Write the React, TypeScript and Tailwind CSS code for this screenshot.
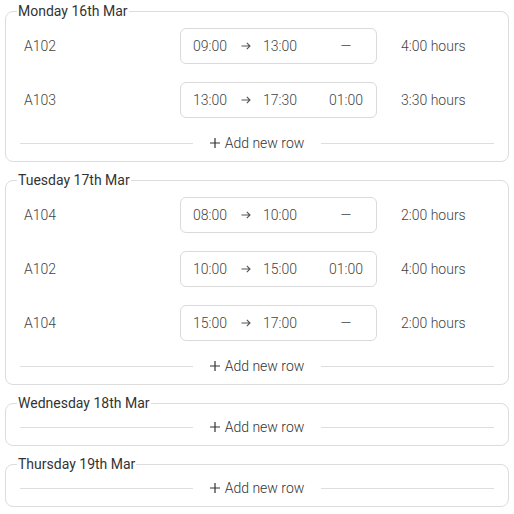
type Row = { room: string; start: string; end: string; brk: string | null; hours: string };
type Day = { label: string; rows: Row[] };

const days: Day[] = [
  {
    label: "Monday 16th Mar",
    rows: [
      { room: "A102", start: "09:00", end: "13:00", brk: null, hours: "4:00 hours" },
      { room: "A103", start: "13:00", end: "17:30", brk: "01:00", hours: "3:30 hours" },
    ],
  },
  {
    label: "Tuesday 17th Mar",
    rows: [
      { room: "A104", start: "08:00", end: "10:00", brk: null, hours: "2:00 hours" },
      { room: "A102", start: "10:00", end: "15:00", brk: "01:00", hours: "4:00 hours" },
      { room: "A104", start: "15:00", end: "17:00", brk: null, hours: "2:00 hours" },
    ],
  },
  { label: "Wednesday 18th Mar", rows: [] },
  { label: "Thursday 19th Mar", rows: [] },
];

function Arrow() {
  return (
    <svg width="10" height="8" viewBox="0 0 10 8" fill="none" stroke="#555" strokeWidth="1.1">
      <path d="M0.5 4h8.5M5.8 0.8L9 4l-3.2 3.2" />
    </svg>
  );
}

function Plus() {
  return (
    <svg width="10" height="10" viewBox="0 0 10 10" fill="none" stroke="#333" strokeWidth="1.2">
      <path d="M5 0v10M0 5h10" />
    </svg>
  );
}

function TimeRow({ row }: { row: Row }) {
  return (
    <div className="flex items-center py-[9px] font-light text-[#444]">
      <div className="w-[160px] pl-1">{row.room}</div>
      <div className="flex h-[36px] w-[197px] items-center rounded-[6px] border border-[#dadada] pl-3 pr-[13px]">
        <span className="w-[35px]">{row.start}</span>
        <span className="ml-[13px] flex items-center">
          <Arrow />
        </span>
        <span className="ml-[12px]">{row.end}</span>
        <span className="ml-auto w-[34px] text-center">{row.brk ?? "—"}</span>
      </div>
      <div className="ml-6">{row.hours}</div>
    </div>
  );
}

function AddRow() {
  return (
    <div className="mt-[1px] flex h-[30px] items-center">
      <div className="h-px flex-1 bg-[#dedede]" />
      <button className="mx-[17px] flex items-center gap-[5px] font-light text-[#333]">
        <Plus />
        <span>Add new row</span>
      </button>
      <div className="h-px flex-1 bg-[#dedede]" />
    </div>
  );
}

export default function App() {
  return (
    <div
      className="flex w-[514px] flex-col gap-[10px] bg-white pt-[3px] text-[14px] leading-4"
      style={{ fontFamily: "Roboto, 'Liberation Sans', sans-serif" }}
    >
      {days.map((day) => (
        <fieldset
          key={day.label}
          className="mx-[5px] rounded-[8px] border border-[#dcdcdc] px-[14px] pb-[3px]"
        >
          <legend className="ml-[-3px] px-[1px] text-[#333]">{day.label}</legend>
          {day.rows.map((row, i) => (
            <TimeRow key={i} row={row} />
          ))}
          <AddRow />
        </fieldset>
      ))}
    </div>
  );
}
